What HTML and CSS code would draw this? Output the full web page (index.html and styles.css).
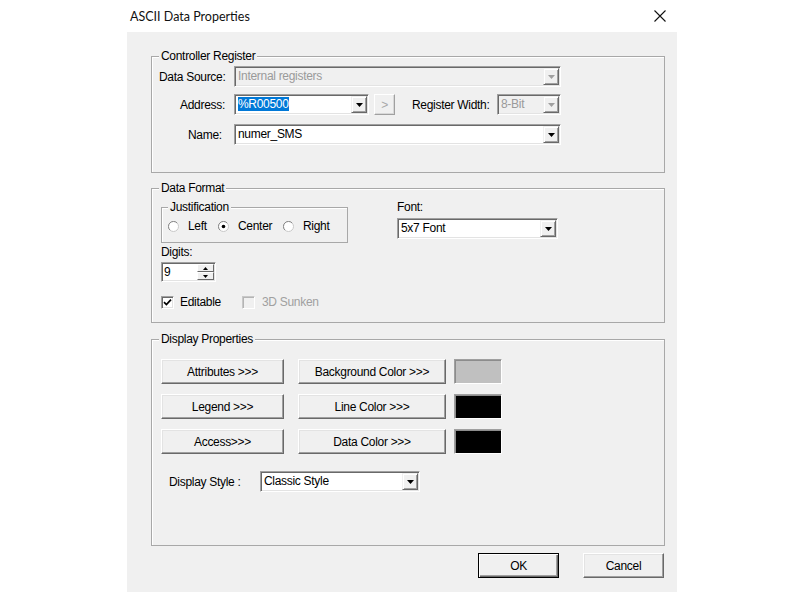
FILE: index.html
```html
<!DOCTYPE html>
<html>
<head>
<meta charset="utf-8">
<title>ASCII Data Properties</title>
<link rel="stylesheet" href="styles.css">
</head>
<body>
<div class="dialog">
  <div class="titlebar">
    <span class="title">ASCII Data Properties</span>
    <svg class="close" width="12" height="12" viewBox="0 0 12 12"><path d="M0.5 0.5L11.5 11.5M11.5 0.5L0.5 11.5" stroke="#111" stroke-width="1.1" fill="none"/></svg>
  </div>
  <div class="panel">
    <fieldset class="group g1">
      <legend>Controller Register</legend>
      <div class="row">
        <span class="lbl l-src">Data Source:</span>
        <div class="combo disabled w-wide"><span class="ctext">Internal registers</span><span class="dd"><svg width="7" height="4" viewBox="0 0 7 4"><path d="M0 0H7L3.5 4Z" fill="#a0a0a0"/></svg></span></div>
      </div>
      <div class="row r2">
        <span class="lbl l-addr">Address:</span>
        <div class="combo w-addr"><span class="ctext"><span class="sel">%R00500</span></span><span class="dd"><svg width="7" height="4" viewBox="0 0 7 4"><path d="M0 0H7L3.5 4Z" fill="#000"/></svg></span></div>
        <div class="sbtn">&gt;</div>
        <span class="lbl-rw">Register Width:</span>
        <div class="combo disabled w-rw"><span class="ctext">8-Bit</span><span class="dd"><svg width="7" height="4" viewBox="0 0 7 4"><path d="M0 0H7L3.5 4Z" fill="#a0a0a0"/></svg></span></div>
      </div>
      <div class="row r3">
        <span class="lbl l-name">Name:</span>
        <div class="combo w-wide"><span class="ctext">numer_SMS</span><span class="dd"><svg width="7" height="4" viewBox="0 0 7 4"><path d="M0 0H7L3.5 4Z" fill="#000"/></svg></span></div>
      </div>
    </fieldset>

    <fieldset class="group g2">
      <legend>Data Format</legend>
      <div class="g2-body">
        <div class="col-left">
          <fieldset class="group just">
            <legend>Justification</legend>
            <div class="radios">
              <span class="opt o1"><svg class="radio" width="11" height="11" viewBox="0 0 11 11"><circle cx="5.5" cy="5.5" r="5" fill="#fff" stroke="#c8c8c8"/><path d="M1.9 9.1A5 5 0 0 1 9.1 1.9" stroke="#8a8a8a" fill="none"/></svg>Left</span>
              <span class="opt o2"><svg class="radio" width="11" height="11" viewBox="0 0 11 11"><circle cx="5.5" cy="5.5" r="5" fill="#fff" stroke="#c8c8c8"/><path d="M1.9 9.1A5 5 0 0 1 9.1 1.9" stroke="#8a8a8a" fill="none"/><circle cx="5.5" cy="5.5" r="1.8" fill="#000"/></svg>Center</span>
              <span class="opt o3"><svg class="radio" width="11" height="11" viewBox="0 0 11 11"><circle cx="5.5" cy="5.5" r="5" fill="#fff" stroke="#c8c8c8"/><path d="M1.9 9.1A5 5 0 0 1 9.1 1.9" stroke="#8a8a8a" fill="none"/></svg>Right</span>
            </div>
          </fieldset>
          <div class="digits-lbl">Digits:</div>
          <div class="spin">
            <span class="stext">9</span>
            <span class="sbtns">
              <span class="sb"><svg width="5" height="3" viewBox="0 0 5 3"><path d="M0 3H5L2.5 0Z" fill="#000"/></svg></span>
              <span class="sb"><svg width="5" height="3" viewBox="0 0 5 3"><path d="M0 0H5L2.5 3Z" fill="#000"/></svg></span>
            </span>
          </div>
          <div class="checks">
            <span class="ck ck1"><span class="chk"><svg width="9" height="9" viewBox="0 0 9 9"><path d="M1 4.2L3.4 6.6L8 1.6" stroke="#000" stroke-width="1.7" fill="none"/></svg></span>Editable</span>
            <span class="ck ck2 off"><span class="chk chk-off"></span>3D Sunken</span>
          </div>
        </div>
        <div class="col-right">
          <div class="font-lbl">Font:</div>
          <div class="combo w-font"><span class="ctext">5x7 Font</span><span class="dd"><svg width="7" height="4" viewBox="0 0 7 4"><path d="M0 0H7L3.5 4Z" fill="#000"/></svg></span></div>
        </div>
      </div>
    </fieldset>

    <fieldset class="group g3">
      <legend>Display Properties</legend>
      <div class="g3-body">
        <div class="btn-rows">
          <div class="brow">
            <div class="btn b-left">Attributes &gt;&gt;&gt;</div>
            <div class="btn b-mid">Background Color &gt;&gt;&gt;</div>
            <div class="swatch sw-grey"></div>
          </div>
          <div class="brow">
            <div class="btn b-left">Legend &gt;&gt;&gt;</div>
            <div class="btn b-mid">Line Color &gt;&gt;&gt;</div>
            <div class="swatch sw-black"></div>
          </div>
          <div class="brow">
            <div class="btn b-left">Access&gt;&gt;&gt;</div>
            <div class="btn b-mid">Data Color &gt;&gt;&gt;</div>
            <div class="swatch sw-black"></div>
          </div>
        </div>
        <div class="row style-row">
          <span class="lbl-style">Display Style :</span>
          <div class="combo w-style"><span class="ctext">Classic Style</span><span class="dd"><svg width="7" height="4" viewBox="0 0 7 4"><path d="M0 0H7L3.5 4Z" fill="#000"/></svg></span></div>
        </div>
      </div>
    </fieldset>

    <div class="footer">
      <div class="btn fbtn default">OK</div>
      <div class="btn fbtn">Cancel</div>
    </div>
  </div>
</div>
</body>
</html>
```

FILE: styles.css
```css
* { box-sizing: border-box; }

body {
  margin: 0;
  background: #fff;
  font-family: "Liberation Sans", Arial, sans-serif;
  font-size: 12px;
  letter-spacing: -0.3px;
  color: #000;
}

.dialog {
  width: 550px;
  margin-left: 127px;
}

.titlebar {
  height: 32px;
  display: flex;
  align-items: center;
  justify-content: space-between;
  padding: 0 11px 0 3px;
}

.title {
  font-family: Lato, "Noto Sans", sans-serif;
  font-size: 12.5px;
  letter-spacing: 0;
  color: #111;
}

.close { display: block; }

.panel {
  background: #f0f0f0;
  height: 560px;
  padding: 17px 12px 0 24px;
}

.group {
  margin: 0;
  border: 1px solid #a8a8a8;
  box-shadow: inset 1px 1px #fff;
  padding: 0;
  min-width: 0;
}

.group > legend {
  padding: 0 2px;
  margin-left: 7px;
  line-height: 14px;
  background: #f0f0f0;
}

/* Controller Register */
.g1 { padding: 3px 0 27px 0; }

.row {
  display: flex;
  align-items: center;
  height: 21px;
}
.r2 { margin-top: 7px; }
.r3 { margin-top: 9px; }

.lbl { width: 82px; flex: none; white-space: nowrap; }
.l-src { padding-left: 7px; }
.l-addr { padding-left: 28px; }
.l-name { padding-left: 36px; }

.combo {
  display: flex;
  flex: none;
  height: 21px;
  background: #fff;
  border: 1px solid;
  border-color: #a0a0a0 #fff #fff #a0a0a0;
  box-shadow: inset 1px 1px #696969, inset -1px -1px #e3e3e3;
  padding: 1px;
}
.combo.disabled { background: #f0f0f0; color: #9a9a9a; }

.ctext {
  flex: 1;
  padding-left: 2px;
  line-height: 17px;
  white-space: nowrap;
  overflow: hidden;
}

.sel { background: #0078d7; color: #fff; }

.dd {
  width: 16px;
  flex: none;
  background: #f0f0f0;
  border: 1px solid;
  border-color: #f0f0f0 #696969 #696969 #f0f0f0;
  box-shadow: inset 1px 1px #fff, inset -1px -1px #a0a0a0;
  display: flex;
  align-items: center;
  justify-content: center;
}
.dd svg { display: block; }

.w-wide { width: 327px; }
.w-addr { width: 135px; }
.w-rw { width: 64px; }
.w-font { width: 161px; }
.w-style { width: 160px; }

.sbtn {
  width: 21px;
  height: 21px;
  margin-left: 5px;
  flex: none;
  display: flex;
  align-items: center;
  justify-content: center;
  background: #f0f0f0;
  color: #a8a8a8;
  border: 1px solid;
  border-color: #fff #a0a0a0 #a0a0a0 #fff;
  box-shadow: inset -1px -1px #d8d8d8;
}

.lbl-rw {
  width: 85px;
  margin-left: 17px;
  flex: none;
  white-space: nowrap;
}

/* Data Format */
.g2 {
  margin-top: 8px;
  padding: 0 0 13px 0;
}

.g2-body {
  display: grid;
  grid-template-columns: 236px auto;
  padding-left: 9px;
}

.just {
  margin-top: 5px;
  width: 187px;
  padding: 5px 0 9px 0;
}
.just > legend { margin-left: 6px; }

.radios {
  display: flex;
  height: 14px;
  align-items: center;
  padding-left: 6px;
}
.opt { display: flex; align-items: center; white-space: nowrap; }
.radio { display: block; margin-right: 9px; flex: none; }
.o1 { width: 50px; }
.o2 { width: 65px; }

.digits-lbl { margin-top: 2px; line-height: 14px; }

.spin {
  margin-top: 3px;
  width: 55px;
  height: 20px;
  display: flex;
  background: #fff;
  border: 1px solid;
  border-color: #a0a0a0 #fff #fff #a0a0a0;
  box-shadow: inset 1px 1px #696969, inset -1px -1px #e3e3e3;
  padding: 1px;
}
.stext { flex: 1; padding-left: 1px; line-height: 16px; }
.sbtns { width: 17px; display: flex; flex-direction: column; }
.sb {
  flex: 1;
  background: #f0f0f0;
  border: 1px solid;
  border-color: #fff #696969 #696969 #fff;
  display: flex;
  align-items: center;
  justify-content: center;
}
.sb svg { display: block; }

.checks {
  margin-top: 13px;
  height: 14px;
  display: flex;
  align-items: center;
}
.ck { display: flex; align-items: center; white-space: nowrap; }
.ck1 { width: 81px; }
.ck.off { color: #a0a0a0; }
.chk {
  width: 13px;
  height: 13px;
  flex: none;
  margin-right: 6px;
  background: #fff;
  border: 1px solid;
  border-color: #a0a0a0 #fff #fff #a0a0a0;
  box-shadow: inset 1px 1px #696969, inset -1px -1px #e3e3e3;
  display: flex;
  align-items: center;
  justify-content: center;
}
.chk svg { display: block; }
.chk-off {
  background: #f0f0f0;
  border-color: #c8c8c8 #fff #fff #c8c8c8;
  box-shadow: inset 1px 1px #b4b4b4;
  margin-right: 7px;
}

.font-lbl { margin-top: 5px; line-height: 14px; }
.col-right .combo { margin-top: 4px; }

/* Display Properties */
.g3 {
  margin-top: 9px;
  padding: 13px 0 53px 0;
}

.g3-body { padding-left: 9px; }

.btn-rows {
  display: flex;
  flex-direction: column;
  gap: 10px;
}
.brow { display: flex; }

.btn {
  height: 25px;
  display: flex;
  align-items: center;
  justify-content: center;
  background: #f0f0f0;
  white-space: nowrap;
  border: 1px solid;
  border-color: #fff #696969 #696969 #fff;
  box-shadow: inset -1px -1px #a0a0a0, inset 1px 1px #e3e3e3;
}
.b-left { width: 123px; }
.b-mid { width: 148px; margin-left: 14px; }

.swatch {
  width: 48px;
  height: 25px;
  margin-left: 8px;
  border: 1px solid;
  border-color: #a0a0a0 #fff #fff #a0a0a0;
  box-shadow: inset 1px 1px #8c8c8c;
}
.sw-grey { background: #c0c0c0; }
.sw-black { background: #000; }

.style-row { margin-top: 17px; }
.lbl-style { width: 99px; padding-left: 8px; flex: none; white-space: nowrap; }

/* Footer */
.footer {
  margin-top: 7px;
  display: flex;
  justify-content: flex-end;
  gap: 24px;
  padding-right: 1px;
}
.fbtn { width: 81px; }
.btn.default {
  border: 1px solid #000;
  box-shadow: inset 1px 1px #fff, inset -1px -1px #696969, inset -2px -2px #a0a0a0;
}
```
